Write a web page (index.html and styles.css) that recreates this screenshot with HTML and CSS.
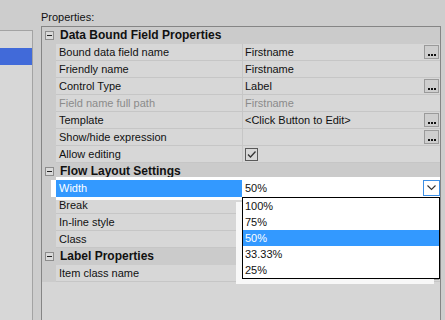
FILE: index.html
```html
<!DOCTYPE html>
<html>
<head>
<meta charset="utf-8">
<title>Properties</title>
<link rel="stylesheet" href="styles.css">
</head>
<body>
<div class="window">
  <div class="sidebar">
    <div class="side-item selected"></div>
  </div>

  <div class="main">
    <div class="caption">Properties:</div>

    <div class="grid">
      <div class="cat"><span class="toggle"></span>Data Bound Field Properties</div>
      <div class="row"><span class="gutter"></span><span class="name">Bound data field name</span><span class="value">Firstname<span class="dots"><i></i><i></i><i></i></span></span></div>
      <div class="row"><span class="gutter"></span><span class="name">Friendly name</span><span class="value">Firstname</span></div>
      <div class="row"><span class="gutter"></span><span class="name">Control Type</span><span class="value">Label<span class="dots"><i></i><i></i><i></i></span></span></div>
      <div class="row disabled"><span class="gutter"></span><span class="name">Field name full path</span><span class="value">Firstname</span></div>
      <div class="row"><span class="gutter"></span><span class="name">Template</span><span class="value">&lt;Click Button to Edit&gt;<span class="dots"><i></i><i></i><i></i></span></span></div>
      <div class="row"><span class="gutter"></span><span class="name">Show/hide expression</span><span class="value"><span class="dots"><i></i><i></i><i></i></span></span></div>
      <div class="row"><span class="gutter"></span><span class="name">Allow editing</span><span class="value"><span class="check"><svg width="11" height="11" viewBox="0 0 11 11"><path d="M2 5.5 L4.5 8 L9.5 2.5" fill="none" stroke="#333" stroke-width="1.3"/></svg></span></span></div>

      <div class="cat"><span class="toggle"></span>Flow Layout Settings</div>
      <div class="row active"><span class="gutter"></span><span class="name">Width</span><span class="value">50%<span class="drop-btn"><svg width="9" height="6" viewBox="0 0 9 6"><path d="M0.5 0.5 L4.5 4.5 L8.5 0.5" fill="none" stroke="#333" stroke-width="1.1"/></svg></span></span>
        <div class="dropdown">
          <div class="opt">100%</div>
          <div class="opt">75%</div>
          <div class="opt hl">50%</div>
          <div class="opt">33.33%</div>
          <div class="opt">25%</div>
        </div>
      </div>
      <div class="row"><span class="gutter"></span><span class="name">Break</span><span class="value"></span></div>
      <div class="row"><span class="gutter"></span><span class="name">In-line style</span><span class="value"></span></div>
      <div class="row"><span class="gutter"></span><span class="name">Class</span><span class="value"></span></div>

      <div class="cat"><span class="toggle"></span>Label Properties</div>
      <div class="row"><span class="gutter"></span><span class="name">Item class name</span><span class="value"><span class="dots"><i></i><i></i><i></i></span></span></div>
    </div>
  </div>
</div>
</body>
</html>
```

FILE: styles.css
```css
body {margin:0; background-color:#cdcdcd; font: 11px "Liberation Sans", Arial, sans-serif; color:#111;}
.window {display:flex; height:100vh;}

.sidebar {width:32px; margin-top:30px; border-top:1px solid #a3a3a3; border-right:1px solid #a3a3a3; background-color:#d7d7d7; padding-top:17px;}
.side-item {height:17px;}
.side-item.selected {background-color:#416ad9;}

.main {display:flex; flex-direction:column; padding-left:8px;}
.caption {padding:11px 0 0 0; height:15px; line-height:13px;}
.grid {flex:1; width:398px; border:1px solid #858585; border-bottom:0; background-color:#d6d6d6;}

.cat {height:16px; line-height:16px; background-color:#cbcbcb; font-weight:bold; font-size:12px; display:flex; align-items:center; padding-left:3px; border-bottom:1px solid #cbcbcb;}
.toggle {width:7px; height:7px; border:1px solid #8c8c8c; background-color:#d9d9d9; margin-right:6px; position:relative;}
.toggle:after {content:""; position:absolute; left:1px; top:3px; width:5px; height:1px; background-color:#222;}

.row {display:flex; height:17px; position:relative;}
.gutter {width:14px; background-color:#cbcbcb;}
.name {width:183px; padding-left:3px; line-height:16px; border-bottom:1px solid #c6c6c6; white-space:nowrap; background-color:#d7d7d7;}
.value {flex:1; display:flex; align-items:center; padding-left:2px; height:16px; line-height:16px; border-left:1px solid #c6c6c6; border-bottom:1px solid #c6c6c6; background-color:#d7d7d7;}
.disabled .name, .disabled .value {color:#8b8b8b;}

.dots {margin-left:auto; margin-right:1px; width:15px; height:14px; border:1px solid #9a9a9a; background-color:#cecece; display:flex; align-items:flex-end; justify-content:center; gap:1px; padding-bottom:2px; box-sizing:border-box;}
.dots i {width:2px; height:2px; background-color:#111;}

.check {width:11px; height:11px; border:1px solid #595959; display:flex; align-items:center; justify-content:center; margin-top:1px;}

.active {z-index:2;}
.active .gutter {background:linear-gradient(to right, #cbcbcb 9px, #fff 9px);}
.active .name {background-color:#3399ff; color:#fff; border-bottom-color:#3399ff; box-shadow:0 -3px 0 #fff, 0 3px 0 #fff;}
.active .value {background-color:#fff; border-left-color:#fff; border-bottom-color:#fff; box-shadow:0 -3px 0 #fff, 0 3px 0 #fff;}
.drop-btn {margin-left:auto; width:15px; height:14px; border:1px solid #3c8fe6; display:flex; align-items:center; justify-content:center;}

.dropdown {position:absolute; left:200px; top:17px; width:196px; border:1px solid #000; background-color:#fff; box-shadow:-6px 5px 0 #f8f8f8; color:#111;}
.opt {height:16px; line-height:16px; padding-left:2px;}
.opt.hl {background-color:#3399ff; color:#fff;}
```
